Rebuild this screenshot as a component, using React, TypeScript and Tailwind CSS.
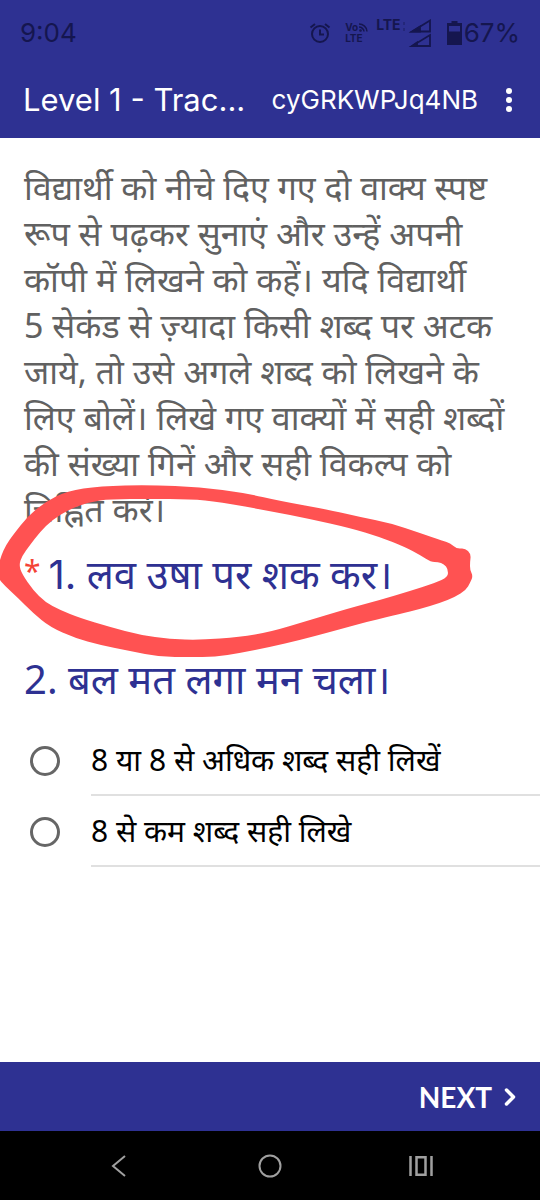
import { ChevronRight } from 'lucide-react';

type Point = [number, number];

const OPTIONS = [
  { id: 'option-1', label: '8 या 8 से अधिक शब्द सही लिखें' },
  { id: 'option-2', label: '8 से कम शब्द सही लिखे' },
];

const OUTER: Point[] = [
  [-2, 568], [1, 556], [6, 545], [13, 535], [28, 516], [45, 502], [67, 491], [100, 486], [150, 485], [200, 487],
  [245, 493], [280, 501], [330, 510], [360, 517], [390, 523], [420, 533], [443, 541], [450, 543], [457, 549],
  [465, 548], [471, 554], [470, 562], [470, 570], [473, 576], [470, 583], [466, 590], [455, 597], [440, 603],
  [420, 609], [400, 614], [370, 621], [330, 632], [300, 640], [270, 647], [240, 653], [215, 657], [190, 657],
  [160, 657], [130, 651], [100, 645], [75, 638], [50, 627], [33, 613], [17, 597], [5, 586], [-2, 578],
];

const INNER: Point[] = [
  [19, 565], [22, 556], [30, 545], [40, 532], [52, 520], [70, 509], [90, 502], [110, 499], [150, 499], [190, 499],
  [220, 502], [270, 511], [310, 519], [350, 528], [380, 537], [405, 547], [420, 555], [431, 562], [438, 562],
  [444, 564], [448, 569], [448, 577], [435, 583], [410, 591], [380, 600], [350, 608], [310, 620], [270, 632],
  [240, 637], [200, 640], [170, 639], [140, 635], [110, 627], [80, 618], [60, 610], [45, 602], [33, 590],
  [22, 574],
];

// closed curve through the midpoints of the hand-drawn outline
function smooth(points: Point[]) {
  const mid = (a: Point, b: Point) => `${(a[0] + b[0]) / 2} ${(a[1] + b[1]) / 2}`;
  const last = points[points.length - 1];
  const curves = points.map((p, i) => `Q${p[0]} ${p[1]} ${mid(p, points[(i + 1) % points.length])}`);
  return `M${mid(last, points[0])}${curves.join('')}Z`;
}

function StatusBar() {
  return (
    <div className="flex h-[66px] items-center justify-between px-5 text-[#15164f]">
      <span className="text-[26px] leading-8">9:04</span>
      <div className="flex items-center">
        <svg className="mr-[14px] h-[22px] w-[22px]" viewBox="0 0 22 22" fill="none" stroke="currentColor" strokeWidth="2">
          <circle cx="11" cy="12" r="8" />
          <path d="M11 7.5V12.5H15" />
          <path d="M1.5 5.5L6 2M20.5 5.5L16 2" />
        </svg>
        <div className="mr-2 flex flex-col text-[10px] font-bold leading-[11px]">
          <span className="flex items-center">
            Vo
            <svg className="h-[9px] w-[10px]" viewBox="0 0 10 9" fill="none" stroke="currentColor" strokeWidth="1.5">
              <path d="M1 1C5 1 9 4 9 8.5M1 4C3.5 4 6 6 6 8.5" />
              <circle cx="2.5" cy="7.5" r=".6" />
            </svg>
          </span>
          <span>LTE</span>
        </div>
        <span className="mb-4 text-[14px] font-bold leading-4">LTE</span>
        <svg className="mr-4 h-7 w-[30px]" viewBox="0 0 30 28" fill="none" stroke="currentColor" strokeWidth="1.8">
          <path d="M3 3V6M3 9V12" opacity=".4" />
          <path d="M11 12.5H29V1.5Z" />
          <path d="M11 12.5H19V7.5Z" fill="currentColor" />
          <path d="M11 27H29V16Z" />
          <path d="M11 27H16V23.5Z" fill="currentColor" />
        </svg>
        <svg className="mr-[2px] h-6 w-[15px]" viewBox="0 0 15 24">
          <path d="M4.5 0H10.5V2H15V24H0V2H4.5ZM2 5V10.5H13V5Z" fill="currentColor" fillRule="evenodd" />
        </svg>
        <span className="text-[26px] leading-8">67%</span>
      </div>
    </div>
  );
}

function AppBar() {
  return (
    <div className="flex h-[72px] items-center pb-1 pl-[23px] pr-6 text-white">
      <h1 className="flex-1 whitespace-nowrap text-[31px] leading-10">Level 1 - Trac...</h1>
      <span className="whitespace-nowrap text-[26px] leading-10">cyGRKWPJq4NB</span>
      <button type="button" aria-label="More options" className="ml-6">
        <svg className="h-6 w-[14px]" viewBox="0 0 14 24" fill="currentColor">
          <circle cx="7" cy="3" r="3" />
          <circle cx="7" cy="12" r="3" />
          <circle cx="7" cy="21" r="3" />
        </svg>
      </button>
    </div>
  );
}

function Circled() {
  return (
    <svg className="pointer-events-none absolute -top-12 left-0 h-[176px] w-[480px]" viewBox="0 484 480 176">
      <path d={smooth(OUTER) + smooth(INNER)} fill="#ff5252" fillRule="evenodd" />
    </svg>
  );
}

function NavBar() {
  return (
    <nav className="flex h-[69px] items-center justify-around bg-black px-11 text-[#a0a0a0]">
      <button type="button" aria-label="Back">
        <svg className="h-6 w-6" viewBox="0 0 24 24" fill="none" stroke="currentColor" strokeWidth="2">
          <path d="M18 2L6 12L18 22" />
        </svg>
      </button>
      <button type="button" aria-label="Home">
        <svg className="h-6 w-6" viewBox="0 0 24 24" fill="none" stroke="currentColor" strokeWidth="2">
          <circle cx="12" cy="12" r="10.5" />
        </svg>
      </button>
      <button type="button" aria-label="Recent apps">
        <svg className="h-6 w-6" viewBox="0 0 24 24" fill="none" stroke="currentColor" strokeWidth="2.5">
          <path d="M1.5 2V22M22.5 2V22M7.5 3.2H16.5V20.8H7.5Z" />
        </svg>
      </button>
    </nav>
  );
}

export default function App() {
  return (
    <div className="flex min-h-screen flex-col bg-white font-['Inter','Noto_Sans',sans-serif]">
      <header className="bg-[#2e3192]">
        <StatusBar />
        <AppBar />
      </header>

      <main lang="hi" className="flex-1 overflow-hidden pt-[26px] font-['Noto_Sans',sans-serif]">
        <p className="whitespace-nowrap pl-6 text-[34px] leading-[46px] text-[#616161]">
          विद्यार्थी को नीचे दिए गए दो वाक्य स्पष्ट
          <br />
          रूप से पढ़कर सुनाएं और उन्हें अपनी
          <br />
          कॉपी में लिखने को कहें। यदि विद्यार्थी
          <br />
          5 सेकंड से ज़्यादा किसी शब्द पर अटक
          <br />
          जाये, तो उसे अगले शब्द को लिखने के
          <br />
          लिए बोलें। लिखे गए वाक्यों में सही शब्दों
          <br />
          की संख्या गिनें और सही विकल्प को
          <br />
          चिह्नित करें।
        </p>

        <fieldset>
          <legend className="relative w-full pt-4 text-[40px] leading-[52px] text-[#2e3192]">
            <span className="flex items-start whitespace-nowrap pl-6">
              <span className="mr-2 text-[30px] leading-[46px] text-[#f44336]">*</span>
              <span>
                <span className="font-['Inter',sans-serif]">1.</span> लव उषा पर शक कर।
              </span>
            </span>
            <span className="mt-[52px] block whitespace-nowrap pl-6">2. बल मत लगा मन चला।</span>
            <Circled />
          </legend>

          <div className="pt-5">
            {OPTIONS.map((option) => (
              <div key={option.id} className="flex items-center pl-[30px]">
                <input
                  type="radio"
                  name="answer"
                  id={option.id}
                  className="h-[30px] w-[30px] shrink-0 appearance-none rounded-full border-[3px] border-[#666] checked:border-8"
                />
                <label
                  htmlFor={option.id}
                  className="ml-[31px] flex h-[71px] flex-1 items-center whitespace-nowrap border-b-2 border-[#e0e0e0] text-[30px] text-black"
                >
                  {option.label}
                </label>
              </div>
            ))}
          </div>
        </fieldset>
      </main>

      <footer className="flex h-[69px] items-center justify-end bg-[#2e3192] pr-4">
        <button type="button" className="flex items-center text-[28px] font-bold text-white font-['Lato','Noto_Sans',sans-serif]">
          NEXT
          <ChevronRight className="ml-1 h-7 w-7" strokeWidth={3} />
        </button>
      </footer>
      <NavBar />
    </div>
  );
}
